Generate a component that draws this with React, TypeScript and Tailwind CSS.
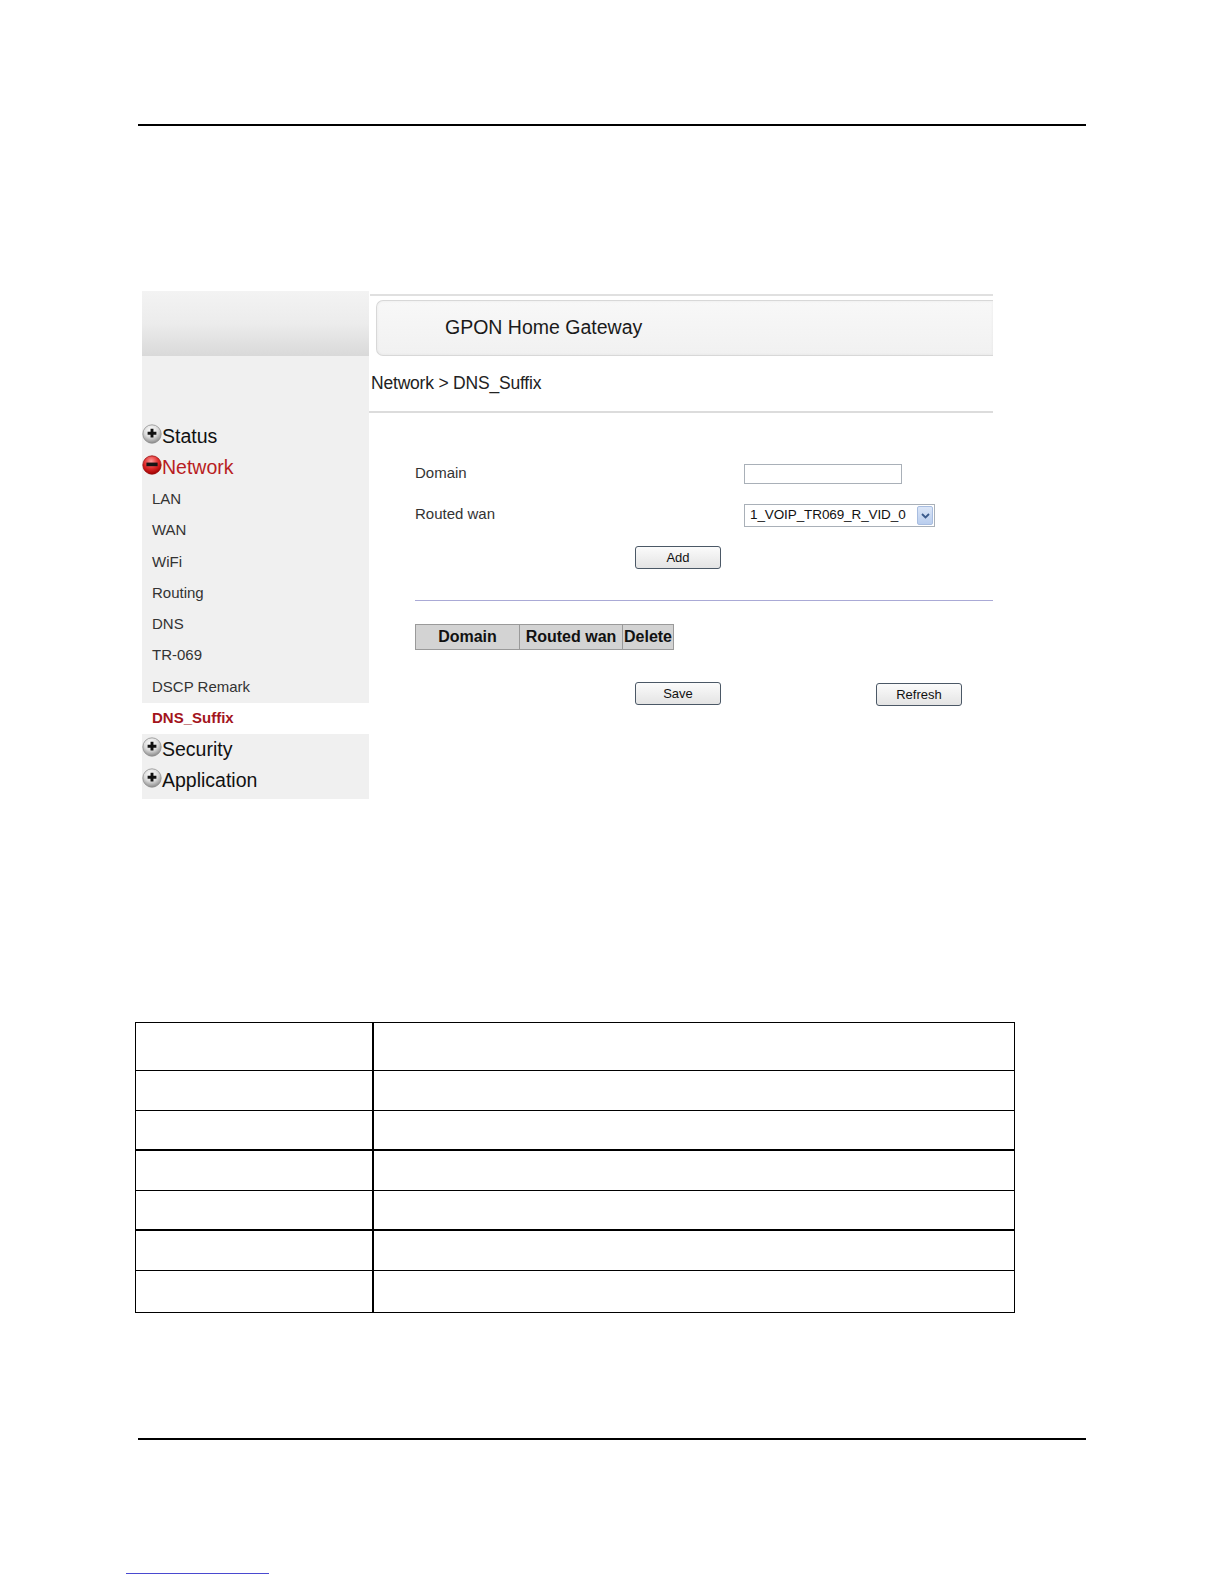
function PlusIcon() {
  return (
    <svg width="20" height="20" viewBox="0 0 20 20" className="shrink-0 -mt-[5px]">
      <defs>
        <radialGradient id="plusg" cx="45%" cy="30%" r="70%">
          <stop offset="0" stopColor="#ffffff" />
          <stop offset="0.55" stopColor="#dcdcdc" />
          <stop offset="1" stopColor="#8a8a8a" />
        </radialGradient>
      </defs>
      <circle cx="10" cy="10" r="9.2" fill="url(#plusg)" stroke="#909090" strokeWidth="0.8" />
      <path d="M10 4.8v8.8M5.6 9.2h8.8" stroke="#111" strokeWidth="2.9" />
    </svg>
  )
}

function MinusIcon() {
  return (
    <svg width="20" height="20" viewBox="0 0 20 20" className="shrink-0 -mt-[5px]">
      <defs>
        <radialGradient id="minusg" cx="45%" cy="30%" r="70%">
          <stop offset="0" stopColor="#ff9c9c" />
          <stop offset="0.55" stopColor="#e02a2a" />
          <stop offset="1" stopColor="#a00000" />
        </radialGradient>
      </defs>
      <circle cx="10" cy="10" r="9.2" fill="url(#minusg)" stroke="#981010" strokeWidth="0.8" />
      <rect x="4.4" y="7.6" width="11.2" height="3.6" fill="#151515" />
    </svg>
  )
}

function Btn({ label }: { label: string }) {
  return (
    <button className="w-[86px] h-[23px] rounded-[3px] border border-[#4b5866] bg-gradient-to-b from-[#fbfbfb] to-[#e4e4e4] text-[13px] text-[#111] leading-none">
      {label}
    </button>
  )
}

export default function App() {
  const subItems = ['LAN', 'WAN', 'WiFi', 'Routing', 'DNS', 'TR-069', 'DSCP Remark']
  const rowHeights = ['h-[48px]', 'h-[40px]', 'h-[40px]', 'h-[40px]', 'h-[40px]', 'h-[40px]', 'h-[41px]']
  const thick = [false, false, true, false, true, false, false]

  return (
    <div className="w-[1224px] h-[1584px] bg-white flex flex-col font-['Liberation_Sans',Arial,sans-serif] text-[#222]">
      {/* top rule */}
      <div className="mt-[124px] mx-[138px] h-[2px] bg-black" />

      {/* screenshot */}
      <div className="mt-[165px] ml-[142px] w-[851px] h-[508px] flex">
        {/* sidebar */}
        <div className="w-[227px] flex flex-col bg-[#f0f0f0]">
          <div className="h-[65px] bg-gradient-to-b from-[#f3f3f3] via-[#ececec] to-[#d9d9d9]" />
          <div className="pt-[65px] flex flex-col">
            <div className="h-[31.3px] flex items-center text-[19.5px] text-[#111]">
              <PlusIcon />
              <span>Status</span>
            </div>
            <div className="h-[31.3px] flex items-center text-[19.5px] text-[#b81c22]">
              <MinusIcon />
              <span>Network</span>
            </div>
            {subItems.map((s) => (
              <div key={s} className="h-[31.3px] flex items-center pl-[10px] text-[15px] text-[#333]">
                {s}
              </div>
            ))}
            <div className="h-[31.3px] flex items-center pl-[10px] text-[15px] font-bold text-[#a3141c] bg-white">
              DNS_Suffix
            </div>
            <div className="h-[31.3px] flex items-center text-[19.5px] text-[#111]">
              <PlusIcon />
              <span>Security</span>
            </div>
            <div className="h-[31.3px] flex items-center text-[19.5px] text-[#111]">
              <PlusIcon />
              <span>Application</span>
            </div>
          </div>
        </div>

        {/* main */}
        <div className="flex-1 flex flex-col">
          <div className="mt-[3px] ml-[1px] h-[2px] bg-[#e0e0e0]" />
          <div className="mt-[4px] ml-[7px] h-[56px] flex items-center pl-[68px] rounded-l-[7px] border border-r-0 border-[#d8d8d8] bg-gradient-to-b from-[#f8f8f8] to-[#f1f1f1] text-[19.5px] text-[#1a1a1a] shadow-[inset_0_0_3px_rgba(0,0,0,0.06)]">
            GPON Home Gateway
          </div>
          <div className="h-[55px] flex items-center pl-[2px] text-[17.5px] text-[#222] tracking-[-0.2px]">
            Network &gt; DNS_Suffix
          </div>
          <div className="h-[2px] bg-[#dcdcdc]" />

          <div className="pl-[46px] flex flex-col">
            <div className="mt-[51px] h-[20px] flex items-center">
              <span className="w-[329px] text-[15px] text-[#333] -mt-[2px]">Domain</span>
              <div className="w-[158px] h-[20px] border border-[#a9b0b8] bg-white" />
            </div>
            <div className="mt-[20px] h-[23px] flex items-center">
              <span className="w-[329px] text-[15px] text-[#333] -mt-[2px]">Routed wan</span>
              <div className="w-[191px] h-[23px] border border-[#a9b0b8] bg-white flex items-center">
                <span className="flex-1 pl-[5px] text-[13.5px] text-[#111] tracking-[-0.1px]">1_VOIP_TR069_R_VID_0</span>
                <div className="w-[16px] h-[19px] mr-[1px] rounded-[2px] bg-gradient-to-b from-[#dbe6f7] to-[#b9cdee] border border-[#a8bde0] flex items-center justify-center">
                  <svg width="9" height="6" viewBox="0 0 9 6">
                    <path d="M1 1l3.5 3.5L8 1" fill="none" stroke="#3a5a8c" strokeWidth="1.8" />
                  </svg>
                </div>
              </div>
            </div>
            <div className="mt-[18px] ml-[220px]">
              <Btn label="Add" />
            </div>
            <div className="mt-[31px] h-px bg-[#aaaad6]" />
            <div className="mt-[23px] flex">
              <div className="flex h-[26px] bg-[#d3d3d3] border border-[#9a9a9a] text-[16px] font-bold text-[#111]">
                <div className="w-[104px] flex items-center justify-center border-r border-[#9a9a9a]">Domain</div>
                <div className="w-[103px] flex items-center justify-center border-r border-[#9a9a9a]">Routed wan</div>
                <div className="w-[50px] flex items-center justify-center">Delete</div>
              </div>
            </div>
            <div className="mt-[32px] flex ml-[220px]">
              <Btn label="Save" />
              <div className="ml-[155px]">
                <Btn label="Refresh" />
              </div>
            </div>
          </div>
        </div>
      </div>

      {/* bottom table */}
      <div className="mt-[223px] ml-[135px] w-[880px] border border-black flex flex-col">
        {rowHeights.map((h, i) => (
          <div
            key={i}
            className={`${h} flex ${i < rowHeights.length - 1 ? (thick[i] ? 'border-b-2' : 'border-b') : ''} border-black`}
          >
            <div className="w-[238px] border-r-2 border-black" />
            <div className="flex-1" />
          </div>
        ))}
      </div>

      {/* bottom rule */}
      <div className="mt-[125px] mx-[138px] h-[2px] bg-black" />

      {/* link underline */}
      <div className="mt-[133px] ml-[126px] w-[143px] h-px bg-[#4a4ad0]" />
    </div>
  )
}
